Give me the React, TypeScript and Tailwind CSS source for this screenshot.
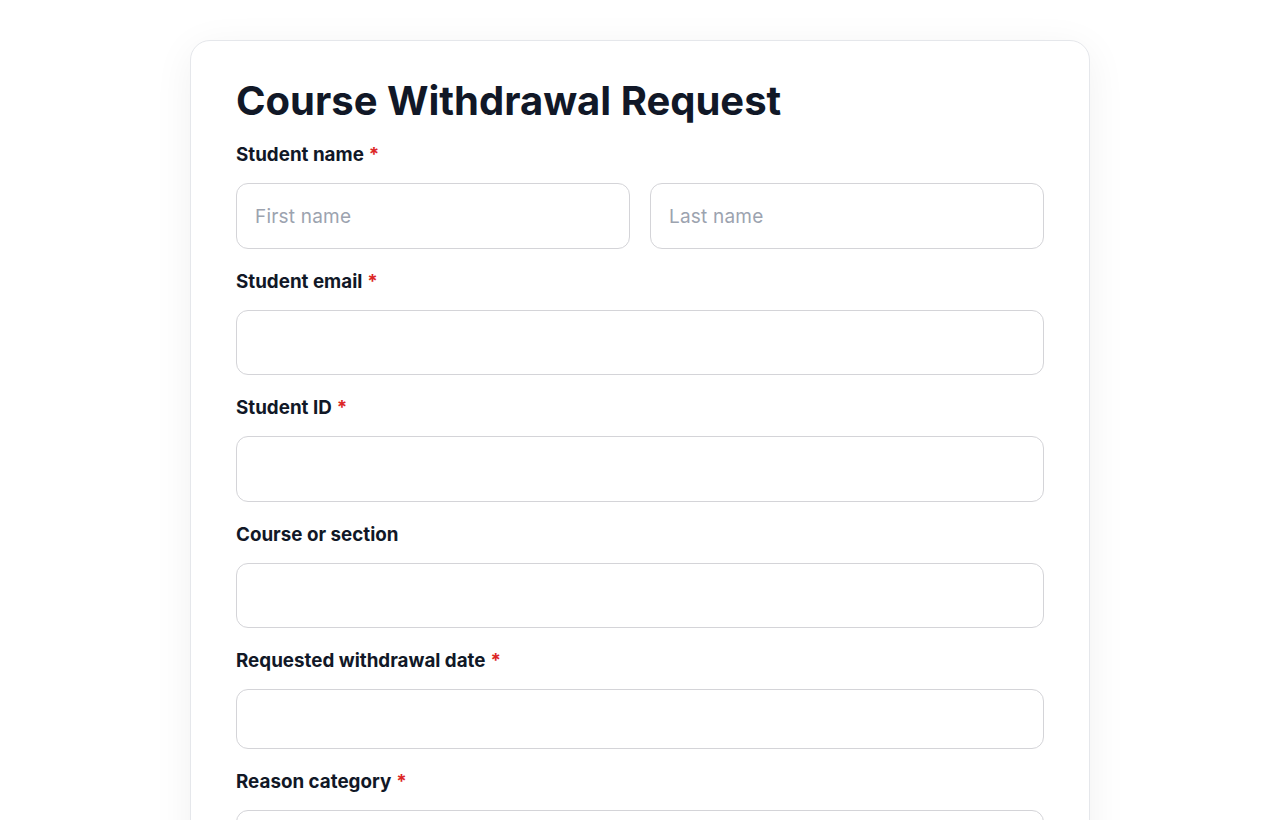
import React from "react";

const Label = ({ text, required }: { text: string; required?: boolean }) => (
  <label className="block text-[18.8px] leading-[24px] font-bold text-[#111827] mb-[16px]">
    {text}
    {required && <span className="text-[#dc2626] ml-[5px]">*</span>}
  </label>
);

const Input = ({ placeholder, h = "h-[66px]" }: { placeholder?: string; h?: string }) => (
  <input
    placeholder={placeholder}
    className={`w-full ${h} rounded-[12px] border border-[#d4d4d8] bg-white px-[18px] text-[19px] text-[#111827] placeholder:text-[#9ca3af] outline-none tracking-[0.2px]`}
  />
);

export default function App() {
  return (
    <div
      className="min-h-screen bg-white pt-[40px] flex justify-center"
      style={{ fontFamily: "Inter, 'Noto Sans', sans-serif" }}
    >
      <div className="w-[900px] rounded-[20px] border border-[#e5e7eb] bg-white px-[45px] pt-[34px] pb-[40px] shadow-[0_8px_40px_rgba(0,0,0,0.06)]">
        <h1 className="text-[40px] leading-[52px] font-bold text-[#111827] mb-[16px]">
          Course Withdrawal Request
        </h1>
        <div className="flex flex-col gap-[21px]">
          <div>
            <Label text="Student name" required />
            <div className="grid grid-cols-2 gap-[20px]">
              <Input placeholder="First name" />
              <Input placeholder="Last name" />
            </div>
          </div>
          <div>
            <Label text="Student email" required />
            <Input h="h-[65px]" />
          </div>
          <div>
            <Label text="Student ID" required />
            <Input />
          </div>
          <div>
            <Label text="Course or section" />
            <Input h="h-[65px]" />
          </div>
          <div>
            <Label text="Requested withdrawal date" required />
            <Input h="h-[60px]" />
          </div>
          <div>
            <Label text="Reason category" required />
            <Input />
          </div>
        </div>
      </div>
    </div>
  );
}
